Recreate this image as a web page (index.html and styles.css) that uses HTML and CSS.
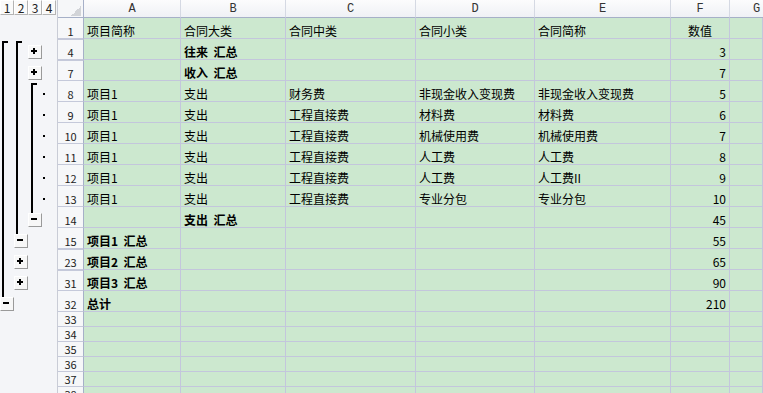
FILE: index.html
```html
<!DOCTYPE html>
<html lang="zh-CN">
<head>
    <meta charset="UTF-8">
    <title>合同汇总</title>
    <link rel="stylesheet" href="styles.css">
</head>
<body>
    <div class="sheet" id="sheet">
        <div class="row">
            <div class="slot"><span class="level">1</span></div>
            <div class="slot"><span class="level">2</span></div>
            <div class="slot"><span class="level">3</span></div>
            <div class="slot"><span class="level">4</span></div>
            <div class="corner"></div>
            <div class="col-head">A</div>
            <div class="col-head">B</div>
            <div class="col-head">C</div>
            <div class="col-head">D</div>
            <div class="col-head">E</div>
            <div class="col-head">F</div>
            <div class="col-head last">G</div>
        </div>
    </div>

    <script>
        // row number, outline marks (one char per level), cells A-F, flags
        const rows = [
            [1, '    ', ['项目简称', '合同大类', '合同中类', '合同小类', '合同简称', '数值'], 'title'],
            [4, '[[+ ', ['', '往来  汇总', '', '', '', '3'], 'gap bold'],
            [7, '||+ ', ['', '收入  汇总', '', '', '', '7'], 'gap bold'],
            [8, '||[.', ['项目1', '支出', '财务费', '非现金收入变现费', '非现金收入变现费', '5']],
            [9, '|||.', ['项目1', '支出', '工程直接费', '材料费', '材料费', '6']],
            [10, '|||.', ['项目1', '支出', '工程直接费', '机械使用费', '机械使用费', '7']],
            [11, '|||.', ['项目1', '支出', '工程直接费', '人工费', '人工费', '8']],
            [12, '|||.', ['项目1', '支出', '工程直接费', '人工费', '人工费II', '9']],
            [13, '|||.', ['项目1', '支出', '工程直接费', '专业分包', '专业分包', '10']],
            [14, '||- ', ['', '支出  汇总', '', '', '', '45'], 'bold'],
            [15, '|-  ', ['项目1  汇总', '', '', '', '', '55'], 'bold'],
            [23, '|+  ', ['项目2  汇总', '', '', '', '', '65'], 'gap bold'],
            [31, '|+  ', ['项目3  汇总', '', '', '', '', '90'], 'gap bold'],
            [32, '-   ', ['总计', '', '', '', '', '210'], 'bold']
        ];
        for (let n = 33; n <= 38; n++) rows.push([n, '    ', ['', '', '', '', '', '']]);

        const marks = {
            ' ': '',
            '|': 'line',
            '[': 'start',
            '.': 'dot',
            '+': 'open',
            '-': 'close'
        };

        const sheet = document.getElementById('sheet');
        rows.forEach(([no, outline, cells, flags = '']) => {
            let html = `<div class="row ${flags}">`;
            for (const m of outline) {
                const btn = m === '+' ? '<span class="btn plus"></span>' : m === '-' ? '<span class="btn minus"></span>' : '';
                html += `<div class="slot ${marks[m]}">${btn}</div>`;
            }
            html += `<div class="row-head">${no}</div>`;
            cells.forEach((text, i) => {
                const cls = i === 5 ? (flags.includes('title') ? 'mid' : 'num') : 'text';
                html += `<div class="cell ${cls}">${text}</div>`;
            });
            html += '<div class="cell"></div></div>';
            sheet.insertAdjacentHTML('beforeend', html);
        });
    </script>
</body>
</html>
```

FILE: styles.css
```css
body {
    margin: 0;
    overflow: hidden;
    background: #fff;
    color: #000;
    font-family: "Noto Sans CJK SC", sans-serif;
    font-size: 12px;
}

.sheet {
    display: grid;
    grid-template-columns: 14px 14px 14px 16px 26px 97px 105px 130px 119px 136px 59px 1fr;
    grid-template-rows: 18px repeat(14, 21px) repeat(6, 15px);
    height: 393px;
}

.row {
    display: contents;
}

/* outline pane on the left */
.slot {
    --x: 2px;
    display: flex;
    align-items: flex-end;
    background: #f4f5f8;
}

.slot:nth-child(3) {
    --x: 3px;
}

.slot:nth-child(4) {
    border-right: 1px solid #c9ccd6;
}

.line {
    background: linear-gradient(#000, #000) var(--x) 0 / 2px 100% no-repeat, #f4f5f8;
}

.start {
    background: linear-gradient(#000, #000) var(--x) 2px / 2px 100% no-repeat,
                linear-gradient(#000, #000) var(--x) 2px / 6px 2px no-repeat,
                #f4f5f8;
}

.close {
    background: linear-gradient(#000, #000) var(--x) 0 / 2px 6px no-repeat, #f4f5f8;
}

.dot {
    background: linear-gradient(#000, #000) 1px 12px / 2px 2px no-repeat, #f4f5f8;
}

.btn {
    width: 14px;
    height: 14px;
    box-sizing: border-box;
    margin-bottom: 1px;
    border: 1px solid;
    border-color: #fff #9a9a9a #9a9a9a #fff;
}

.btn.plus {
    background: linear-gradient(#000, #000) 2px 4px / 6px 2px no-repeat,
                linear-gradient(#000, #000) 4px 2px / 2px 6px no-repeat,
                #f7f7f7;
}

.btn.minus {
    background: linear-gradient(#000, #000) 2px 4px / 6px 2px no-repeat, #f7f7f7;
}

.level {
    align-self: flex-start;
    width: 14px;
    height: 15px;
    box-sizing: border-box;
    border: 1px solid;
    border-color: #fff #b4b4b4 #b4b4b4 #fff;
    background: #fafafa;
    text-align: center;
    line-height: 13px;
    color: #222;
}

/* headers */
.corner {
    border-right: 1px solid #a6b0c8;
    border-bottom: 1px solid #a6b0c8;
    background: linear-gradient(to bottom right, transparent 50%, #d2d4d8 50%) right 2px bottom 1px / 10px 10px no-repeat,
                #f6f7f9;
}

.col-head {
    display: flex;
    justify-content: center;
    align-items: flex-end;
    padding-bottom: 2px;
    border-right: 1px solid #d5d9e3;
    border-bottom: 1px solid #a6b0c8;
    background: linear-gradient(#fcfcfd, #eff1f5);
    font-family: "Liberation Mono", monospace;
    line-height: 12px;
    color: #333;
}

.col-head.last {
    justify-content: flex-start;
    padding-left: 23px;
    border-right: none;
}

.row-head {
    display: flex;
    justify-content: center;
    align-items: flex-end;
    padding-bottom: 1px;
    border-right: 1px solid #a6b0c8;
    border-bottom: 1px solid #c5c9da;
    background: #f6f7f9;
    font-size: 11px;
    line-height: 11px;
    color: #222;
}

.gap .row-head {
    border-top: 1px solid #c5c9da;
}

/* cells */
.cell {
    display: flex;
    align-items: flex-end;
    padding: 0 3px 1px;
    overflow: hidden;
    border-right: 1px solid #c3c6dc;
    border-bottom: 1px solid #c3c6dc;
    background: #cce8cf;
    line-height: 12px;
    white-space: pre;
}

.cell.num {
    justify-content: flex-end;
}

.cell.mid {
    justify-content: center;
}

.bold .cell.text {
    font-weight: bold;
}
```
